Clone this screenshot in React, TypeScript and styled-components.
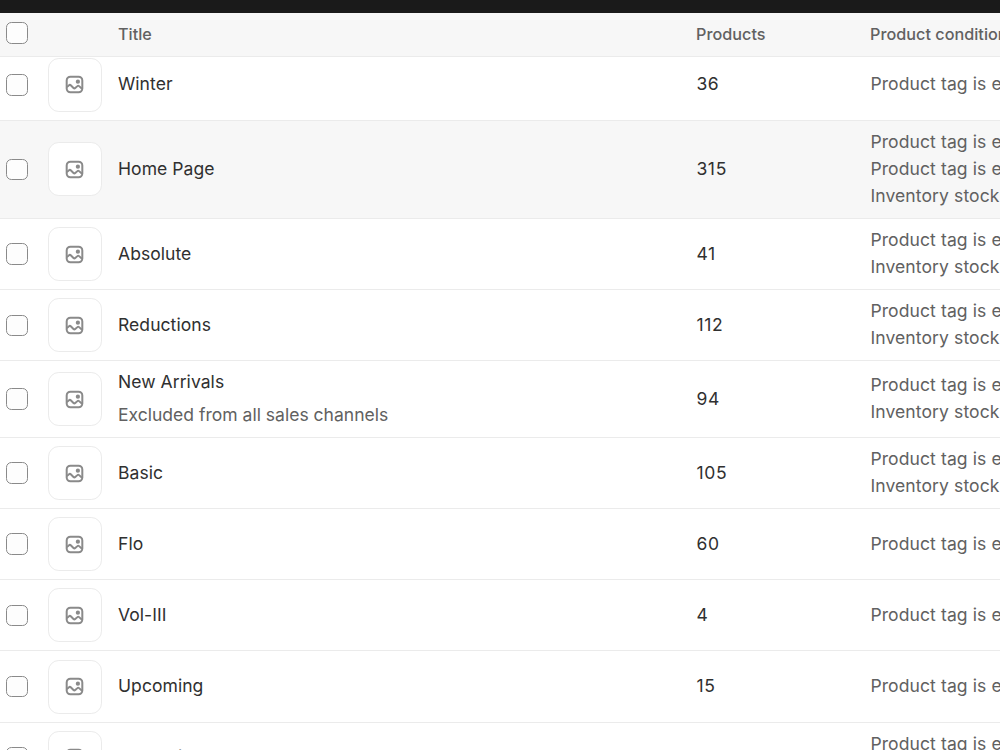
import React from "react";
import styled, { createGlobalStyle } from "styled-components";

const GlobalStyle = createGlobalStyle`
  * { box-sizing: border-box; }
  html, body { margin: 0; height: 100%; overflow: hidden; }
  body { background: #fff; font-family: Inter, sans-serif; }
`;

const Page = styled.div`
  height: 750px;
  width: 1000px;
  overflow: hidden;
  display: flex;
  flex-direction: column;
`;

const TopBar = styled.div`
  height: 13px;
  flex: none;
  background: #1a1a1a;
`;

const HeaderRow = styled.div`
  display: grid;
  grid-template-columns: 48px 70px 578px 174px 400px;
  align-items: center;
  flex: none;
  height: 44px;
  z-index: 1;
  background: #f7f7f7;
  border-bottom: 1px solid #ebebeb;
  color: #616161;
  font-size: 16.2px;
  font-weight: 550;
  line-height: 21.6px;
  letter-spacing: 0.03px;
`;

const HeaderCell = styled.div`
  white-space: nowrap;
`;

const Row = styled.div<{ $height: number; $active?: boolean; $tucked?: boolean }>`
  display: grid;
  grid-template-columns: 48px 70px 578.4px 174px 400px;
  align-items: center;
  flex: none;
  height: ${(p) => p.$height}px;
  margin-top: ${(p) => (p.$tucked ? "-8px" : "0")};
  border-top: 1px solid #ebebeb;
  background: ${(p) => (p.$active ? "#f7f7f7" : "#fff")};
  color: #303030;
  font-size: 17.55px;
  line-height: 27px;
  letter-spacing: 0.05px;
`;

const CheckCell = styled.div<{ $header?: boolean }>`
  display: flex;
  padding: ${(p) => (p.$header ? "0 0 3px 6px" : "0 0 0 6px")};
`;

const Checkbox = styled.span<{ $short?: boolean }>`
  width: 22px;
  height: ${(p) => (p.$short ? "21px" : "22px")};
  border: 1px solid #8a8a8a;
  border-radius: 5.4px;
  background: #fdfdfd;
`;

const Thumbnail = styled.div<{ $raised?: boolean; $iconRaised?: boolean }>`
  width: 54px;
  height: 54px;
  margin-bottom: ${(p) => (p.$raised ? "1px" : "0")};
  padding: ${(p) => (p.$iconRaised ? "0 1px 2px 0" : "0 1px 0 0")};
  display: flex;
  align-items: center;
  justify-content: center;
  border: 1px solid #ebebeb;
  border-radius: 10.8px;
  background: #fff;
`;

const TextCell = styled.div<{ $raised?: boolean }>`
  white-space: nowrap;
  padding-bottom: ${(p) => (p.$raised ? "4px" : "2px")};
`;

const Count = styled(TextCell)`
  letter-spacing: 0.65px;
`;

const Subtitle = styled.div`
  margin-top: 6px;
  color: #616161;
  letter-spacing: 0;
`;

const Conditions = styled(TextCell)`
  color: #616161;
  letter-spacing: 0.1px;
`;

const ImageIcon = () => (
  <svg width="25" height="25" viewBox="0 0 20 20" fill="none" stroke="#8a8a8a" strokeWidth="1.6">
    <rect x="3.75" y="3.75" width="12.5" height="12.5" rx="3" />
    <path d="M3.9 12.1 L5.6 10.6 a1 1 0 0 1 1.4 0 L9.2 12.8 a1 1 0 0 0 1.4 0 L12.3 11.3 a1 1 0 0 1 1.4 0 L16 13.4" />
    <circle cx="12.7" cy="7.7" r="1.7" fill="#8a8a8a" stroke="none" />
  </svg>
);

const TAG = "Product tag is equal to";
const STOCK = "Inventory stock is greater than 0";

type Item = {
  title: string;
  subtitle?: string;
  count: string;
  conditions: string[];
  height: number;
  active?: boolean;
  shortCheck?: boolean;
};

const items: Item[] = [
  { title: "Winter", count: "36", conditions: [TAG], height: 71 },
  {
    title: "Home Page",
    count: "315",
    conditions: [TAG, TAG, STOCK],
    height: 98,
    active: true,
    shortCheck: true,
  },
  { title: "Absolute", count: "41", conditions: [TAG, STOCK], height: 71 },
  { title: "Reductions", count: "112", conditions: [TAG, STOCK], height: 71, shortCheck: true },
  {
    title: "New Arrivals",
    subtitle: "Excluded from all sales channels",
    count: "94",
    conditions: [TAG, STOCK],
    height: 77,
  },
  { title: "Basic", count: "105", conditions: [TAG, STOCK], height: 71 },
  { title: "Flo", count: "60", conditions: [TAG], height: 71 },
  { title: "Vol-III", count: "4", conditions: [TAG], height: 71, shortCheck: true },
  { title: "Upcoming", count: "15", conditions: [TAG], height: 72, shortCheck: true },
  { title: "Promotions", count: "28", conditions: [TAG, STOCK], height: 71 },
];

export default function App() {
  return (
    <Page>
      <GlobalStyle />
      <TopBar />
      <HeaderRow>
        <CheckCell $header>
          <Checkbox />
        </CheckCell>
        <span />
        <HeaderCell>Title</HeaderCell>
        <HeaderCell>Products</HeaderCell>
        <HeaderCell>Product conditions</HeaderCell>
      </HeaderRow>
      {items.map((item, i) => {
        const first = i === 0;
        const edge = first || i === items.length - 1;
        return (
          <Row key={item.title} $height={item.height} $active={item.active} $tucked={first}>
            <CheckCell>
              <Checkbox $short={item.shortCheck} />
            </CheckCell>
            <Thumbnail $raised={item.active} $iconRaised={edge}>
              <ImageIcon />
            </Thumbnail>
            <TextCell $raised={edge}>
              {item.title}
              {item.subtitle && <Subtitle>{item.subtitle}</Subtitle>}
            </TextCell>
            <Count $raised={first}>{item.count}</Count>
            <Conditions $raised={first}>
              {item.conditions.map((text, n) => (
                <div key={n}>{text}</div>
              ))}
            </Conditions>
          </Row>
        );
      })}
    </Page>
  );
}
